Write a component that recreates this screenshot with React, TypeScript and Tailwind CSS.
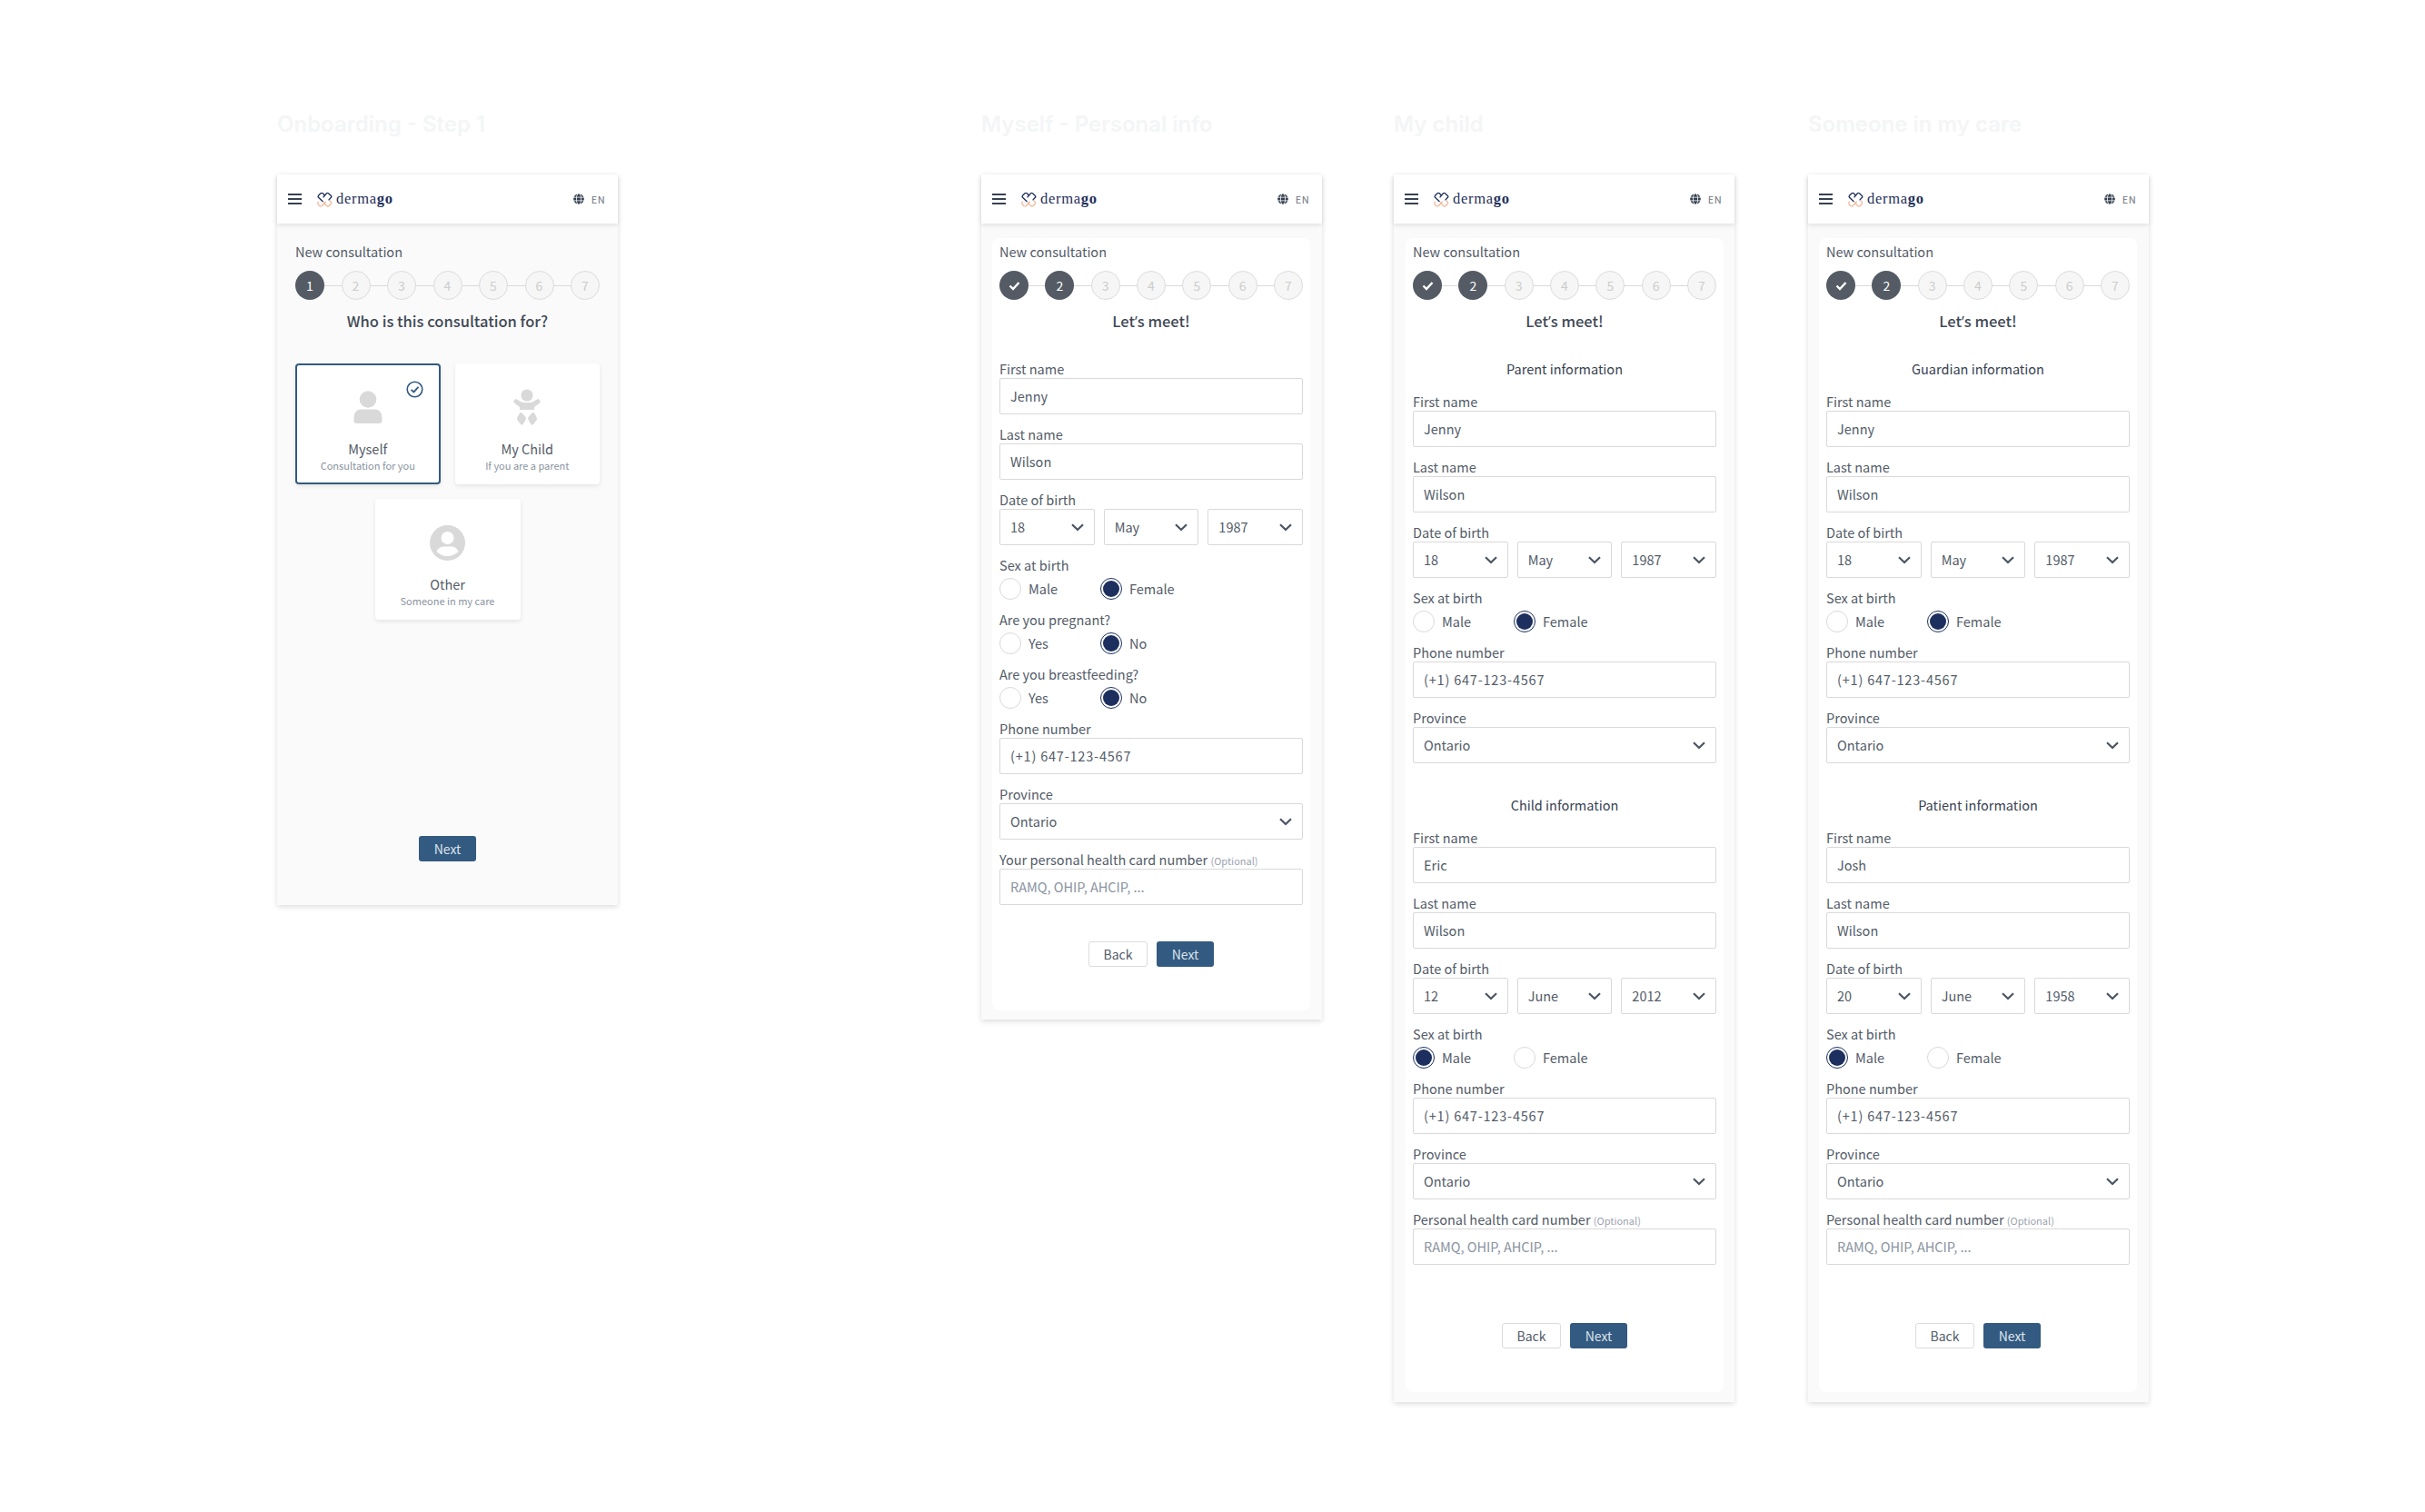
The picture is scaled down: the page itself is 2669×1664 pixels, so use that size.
import React from "react";
import { FaGlobe } from "react-icons/fa";

function Logo() {
  return (
    <svg width="17" height="17" viewBox="0 0 17 17" fill="none" strokeWidth="1.3" strokeLinejoin="round">
      <path d="M8.5 4.2 L6.3 1.8 Q5.2 0.9 4 1.8 L1.5 4.3 Q0.7 5.3 1.5 6.3 L6.5 11" stroke="#1f2f5c" />
      <path d="M6.6 6.4 L10.2 2 Q11.3 0.9 12.5 1.8 L15.4 4.4 Q16.2 5.4 15.4 6.3 L12.6 9.4" stroke="#1f2f5c" />
      <path d="M1.4 10.6 L0.9 12.6 Q0.6 13.5 1.4 14.3 L3 15.8 Q4 16.5 5 15.8 L9.8 11" stroke="#f5b79a" />
      <path d="M7 11.4 L10.6 15.6 Q11.6 16.5 12.7 15.7 L15.2 13.4 Q16 12.4 15.3 11.4 L13.8 9.8" stroke="#f5b79a" />
    </svg>
  );
}

function Header() {
  return (
    <div className="relative z-10 flex h-[54px] items-center bg-white pl-3 pr-[14px] shadow-[0_2px_5px_rgba(0,0,0,0.1)]">
      <div className="flex w-[15px] flex-col gap-[2.5px]">
        <div className="h-[2.5px] bg-[#374151]" />
        <div className="h-[2.5px] bg-[#374151]" />
        <div className="h-[2.5px] bg-[#374151]" />
      </div>
      <div className="ml-[17px] flex items-center">
        <Logo />
        <span className="ml-[4px] font-['Liberation_Serif',serif] text-[16.5px] leading-5 tracking-[0.7px] text-[#1f2f5c]">
          derma<b>go</b>
        </span>
      </div>
      <div className="ml-auto flex items-center gap-2 text-[#6b7280]">
        <FaGlobe className="text-[12px] text-[#374151]" />
        <span className="text-[11px] leading-4 tracking-[0.4px]">EN</span>
      </div>
    </div>
  );
}

function Stepper({ current }: { current: number }) {
  return (
    <div className="flex items-center">
      {[1, 2, 3, 4, 5, 6, 7].map((n) => (
        <React.Fragment key={n}>
          {n > 1 && <div className={"h-px flex-1 bg-[#d9d9d9]"} />}
          {n <= current ? (
            <div className="flex h-8 w-8 items-center justify-center rounded-full bg-[#545b64] text-[14px] leading-5 text-white">
              {n < current ? (
                <svg width="13" height="11" viewBox="0 0 13 11" fill="none">
                  <path d="M1.5 5.5 L5 9 L11.5 2" stroke="white" strokeWidth="2.4" />
                </svg>
              ) : (
                n
              )}
            </div>
          ) : (
            <div className="flex h-8 w-8 items-center justify-center rounded-full border border-[#dcdcdc] bg-[#f6f6f6] text-[14px] leading-5 text-[#cdcdcd]">
              {n}
            </div>
          )}
        </React.Fragment>
      ))}
    </div>
  );
}

function Chevron() {
  return (
    <svg width="14" height="9" viewBox="0 0 14 9" fill="none" className="shrink-0">
      <path d="M1 1.2 L7 7 L13 1.2" stroke="#4b5563" strokeWidth="2.2" />
    </svg>
  );
}

function Label({ children }: { children: React.ReactNode }) {
  return <div className="h-5 text-[14.5px] leading-5 text-[#535b68]">{children}</div>;
}

function TextField({ label, value, hint, phone }: { label: React.ReactNode; value: string; hint?: boolean; phone?: boolean }) {
  return (
    <div>
      <Label>{label}</Label>
      <div className={"flex h-10 items-center rounded-[2px] border border-[#d9d9d9] bg-white px-[11px] text-[14.5px] leading-5 " + (hint ? "text-[#8a93a0]" : "text-[#535b68]") + (phone ? " tracking-[0.8px]" : "")}>
        {value}
      </div>
    </div>
  );
}

function SelectBox({ value }: { value: string }) {
  return (
    <div className="flex h-10 items-center justify-between rounded-[2px] border border-[#d9d9d9] bg-white pl-[11px] pr-[11px] text-[14.5px] leading-5 text-[#535b68]">
      {value}
      <Chevron />
    </div>
  );
}

function DateField({ day, month, year }: { day: string; month: string; year: string }) {
  return (
    <div>
      <Label>Date of birth</Label>
      <div className="grid grid-cols-3 gap-[10px]">
        <SelectBox value={day} />
        <SelectBox value={month} />
        <SelectBox value={year} />
      </div>
    </div>
  );
}

function RadioDot({ checked }: { checked: boolean }) {
  return checked ? (
    <div className="flex h-6 w-6 items-center justify-center rounded-full border border-[#1c2f5e] bg-white">
      <div className="h-[18px] w-[18px] rounded-full bg-[#1c2f5e]" />
    </div>
  ) : (
    <div className="h-6 w-6 rounded-full border border-[#d9d9d9] bg-white" />
  );
}

function RadioField({ label, a, b, selected }: { label: string; a: string; b: string; selected: 0 | 1 }) {
  return (
    <div>
      <Label>{label}</Label>
      <div className="mt-1 flex text-[14.5px] leading-6 text-[#535b68]">
        <div className="flex w-[111px] items-center gap-2">
          <RadioDot checked={selected === 0} />
          {a}
        </div>
        <div className="flex items-center gap-2">
          <RadioDot checked={selected === 1} />
          {b}
        </div>
      </div>
    </div>
  );
}

function Optional({ text }: { text: string }) {
  return (
    <>
      {text} <span className="text-[11px] text-[#9ca3af]">(Optional)</span>
    </>
  );
}

function Buttons() {
  return (
    <div className="flex justify-center gap-[10px]">
      <div className="flex h-7 w-[65px] items-center justify-center rounded-[3px] border border-[#dcdcdc] bg-white text-[14px] leading-5 text-[#535b68]">Back</div>
      <div className="flex h-7 w-[63px] items-center justify-center rounded-[3px] bg-[#335a80] text-[14px] leading-5 text-[#dbe3ec]">Next</div>
    </div>
  );
}

function Screen({ title, ml, height, children }: { title: string; ml: string; height: string; children: React.ReactNode }) {
  return (
    <div className={"w-[375px] shrink-0 " + ml}>
      <div className="h-8 whitespace-nowrap font-['Inter',sans-serif] text-[24px] font-semibold leading-8 text-[#f4f5f6]">{title}</div>
      <div className={"mt-[39px] flex flex-col bg-[#fafafa] shadow-[0_2px_6px_rgba(0,0,0,0.14)] " + height}>
        <Header />
        {children}
      </div>
    </div>
  );
}

function StepIntro({ current, title }: { current: number; title: React.ReactNode }) {
  return (
    <>
      <div className="mt-[5px] h-5 text-[14.5px] leading-5 text-[#535b68]">New consultation</div>
      <div className="mt-[11px]">
        <Stepper current={current} />
      </div>
      <div className="mt-[13px] h-5 text-center text-[16.5px] font-medium leading-5 text-[#414955]">{title}</div>
    </>
  );
}

// the CJK family sets ’ full width, so this one glyph comes from another family
const letsMeet = (
  <>
    Let<span className="font-['Open_Sans',sans-serif]">’</span>s meet!
  </>
);

function Card({ title, sub, icon, selected }: { title: string; sub: string; icon: React.ReactNode; selected?: boolean }) {
  return (
    <div className={"relative flex h-[133px] flex-col items-center rounded-[4px] bg-white shadow-[0_2px_5px_rgba(0,0,0,0.09)] " + (selected ? "border-2 border-[#335a80]" : "")}>
      <div className={"flex h-10 items-center justify-center " + (selected ? "mt-[26px]" : "mt-7")}>{icon}</div>
      <div className="mt-4 h-5 text-[14.5px] leading-5 text-[#535b68]">{title}</div>
      <div className="mt-[-2px] h-5 text-[11px] leading-5 text-[#8a93a0]">{sub}</div>
      {selected && (
        <svg width="19" height="19" viewBox="0 0 19 19" fill="none" className="absolute right-[17px] top-[17px]">
          <circle cx="9.5" cy="9.5" r="8.3" stroke="#335a80" strokeWidth="1.6" />
          <path d="M5.5 9.8 L8.4 12.4 L13.5 6.8" stroke="#335a80" strokeWidth="1.8" />
        </svg>
      )}
    </div>
  );
}

function PersonIcon() {
  return (
    <svg width="32" height="36" viewBox="0 0 32 36" fill="#d9d9d9">
      <circle cx="16" cy="9.5" r="9.3" />
      <path d="M0.5 30 Q0.5 20.5 9 20.5 L23 20.5 Q31.5 20.5 31.5 30 L31.5 33 Q31.5 36 28.5 36 L3.5 36 Q0.5 36 0.5 33 Z" />
    </svg>
  );
}

function BabyIcon() {
  return (
    <svg width="30" height="41" viewBox="0 0 30 41" fill="#d9d9d9">
      <circle cx="15" cy="7" r="6.6" />
      <path d="M3 11 L9 14.5 Q15 16 21 14.5 L27 11 Q30 12 29.5 15 L23 20 L23 23 L7 23 L7 20 L0.5 15 Q0 12 3 11Z" />
      <path d="M7 26.5 Q8.5 25.5 10 27 L13.5 31 Q14.5 33 13 35 L11 38.5 Q9.5 40.5 8 39 L4.5 34.5 Q3.5 33 4.5 31 Z" />
      <path d="M23 26.5 Q21.5 25.5 20 27 L16.5 31 Q15.5 33 17 35 L19 38.5 Q20.5 40.5 22 39 L25.5 34.5 Q26.5 33 25.5 31 Z" />
    </svg>
  );
}

function OtherIcon() {
  return (
    <svg width="39" height="39" viewBox="0 0 39 39">
      <circle cx="19.5" cy="19.5" r="19.5" fill="#d9d9d9" />
      <circle cx="19.5" cy="14" r="7" fill="white" />
      <path d="M7.5 29 Q10 23.5 15 23.5 L24 23.5 Q29 23.5 31.5 29 Q26.5 34 19.5 34 Q12.5 34 7.5 29 Z" fill="white" />
    </svg>
  );
}

function PersonBlock({ first, day, month, year, selected, health }: { first: string; day: string; month: string; year: string; selected: 0 | 1; health?: boolean }) {
  return (
    <div className="flex flex-col gap-3">
      <TextField label="First name" value={first} />
      <TextField label="Last name" value="Wilson" />
      <DateField day={day} month={month} year={year} />
      <RadioField label="Sex at birth" a="Male" b="Female" selected={selected} />
      <TextField label="Phone number" value="(+1) 647-123-4567" phone />
      <div>
        <Label>Province</Label>
        <SelectBox value="Ontario" />
      </div>
      {health && <TextField label={<Optional text="Personal health card number" />} value="RAMQ, OHIP, AHCIP, ..." hint />}
    </div>
  );
}

function TwoPeople({ top, bottom, first, day, month, year, inset }: { top: string; bottom: string; first: string; day: string; month: string; year: string; inset: string }) {
  return (
    <div className={"mt-4 h-[1270px] rounded-lg bg-white px-2 " + inset}>
      <StepIntro current={2} title={letsMeet} />
      <div className="mt-[33px] h-5 text-center text-[14.5px] leading-5 text-[#374151]">{top}</div>
      <div className="mt-4">
        <PersonBlock first="Jenny" day="18" month="May" year="1987" selected={1} />
      </div>
      <div className="mt-9 h-5 text-center text-[14.5px] leading-5 text-[#374151]">{bottom}</div>
      <div className="mt-4">
        <PersonBlock first={first} day={day} month={month} year={year} selected={0} health />
      </div>
      <div className="mt-16">
        <Buttons />
      </div>
    </div>
  );
}

export default function App() {
  return (
    <div className="flex min-h-[1664px] w-[2669px] items-start overflow-hidden bg-white pl-[305px] pt-[121px] font-['Noto_Sans_CJK_SC','Noto_Sans',sans-serif]">
      <Screen title="Onboarding - Step 1" ml="" height="h-[804px]">
        <div className="mx-5 mt-4 flex flex-1 flex-col pb-12">
          <StepIntro current={1} title="Who is this consultation for?" />
          <div className="mt-[37px] grid grid-cols-2 gap-4">
            <Card title="Myself" sub="Consultation for you" icon={<PersonIcon />} selected />
            <Card title="My Child" sub="If you are a parent" icon={<BabyIcon />} />
            <div className="col-span-2 mx-auto w-[160px]">
              <Card title="Other" sub="Someone in my care" icon={<OtherIcon />} />
            </div>
          </div>
          <div className="mt-auto flex justify-center">
            <div className="flex h-7 w-[63px] items-center justify-center rounded-[3px] bg-[#335a80] text-[14px] leading-5 text-[#dbe3ec]">Next</div>
          </div>
        </div>
      </Screen>

      <Screen title="Myself - Personal info" ml="ml-[400px]" height="h-[930px]">
        <div className="ml-3 mr-[13px] mt-4 h-[850px] rounded-lg bg-white px-2">
          <StepIntro current={2} title={letsMeet} />
          <div className="mt-[33px] flex flex-col gap-3">
            <TextField label="First name" value="Jenny" />
            <TextField label="Last name" value="Wilson" />
            <DateField day="18" month="May" year="1987" />
            <RadioField label="Sex at birth" a="Male" b="Female" selected={1} />
            <RadioField label="Are you pregnant?" a="Yes" b="No" selected={1} />
            <RadioField label="Are you breastfeeding?" a="Yes" b="No" selected={1} />
            <TextField label="Phone number" value="(+1) 647-123-4567" phone />
            <div>
              <Label>Province</Label>
              <SelectBox value="Ontario" />
            </div>
            <TextField label={<Optional text="Your personal health card number" />} value="RAMQ, OHIP, AHCIP, ..." hint />
          </div>
          <div className="mt-10">
            <Buttons />
          </div>
        </div>
      </Screen>

      <Screen title="My child" ml="ml-[79px]" height="h-[1351px]">
        <TwoPeople inset="ml-[13px] mr-3" top="Parent information" bottom="Child information" first="Eric" day="12" month="June" year="2012" />
      </Screen>

      <Screen title="Someone in my care" ml="ml-[81px]" height="h-[1351px]">
        <TwoPeople inset="ml-3 mr-[13px]" top="Guardian information" bottom="Patient information" first="Josh" day="20" month="June" year="1958" />
      </Screen>
    </div>
  );
}
